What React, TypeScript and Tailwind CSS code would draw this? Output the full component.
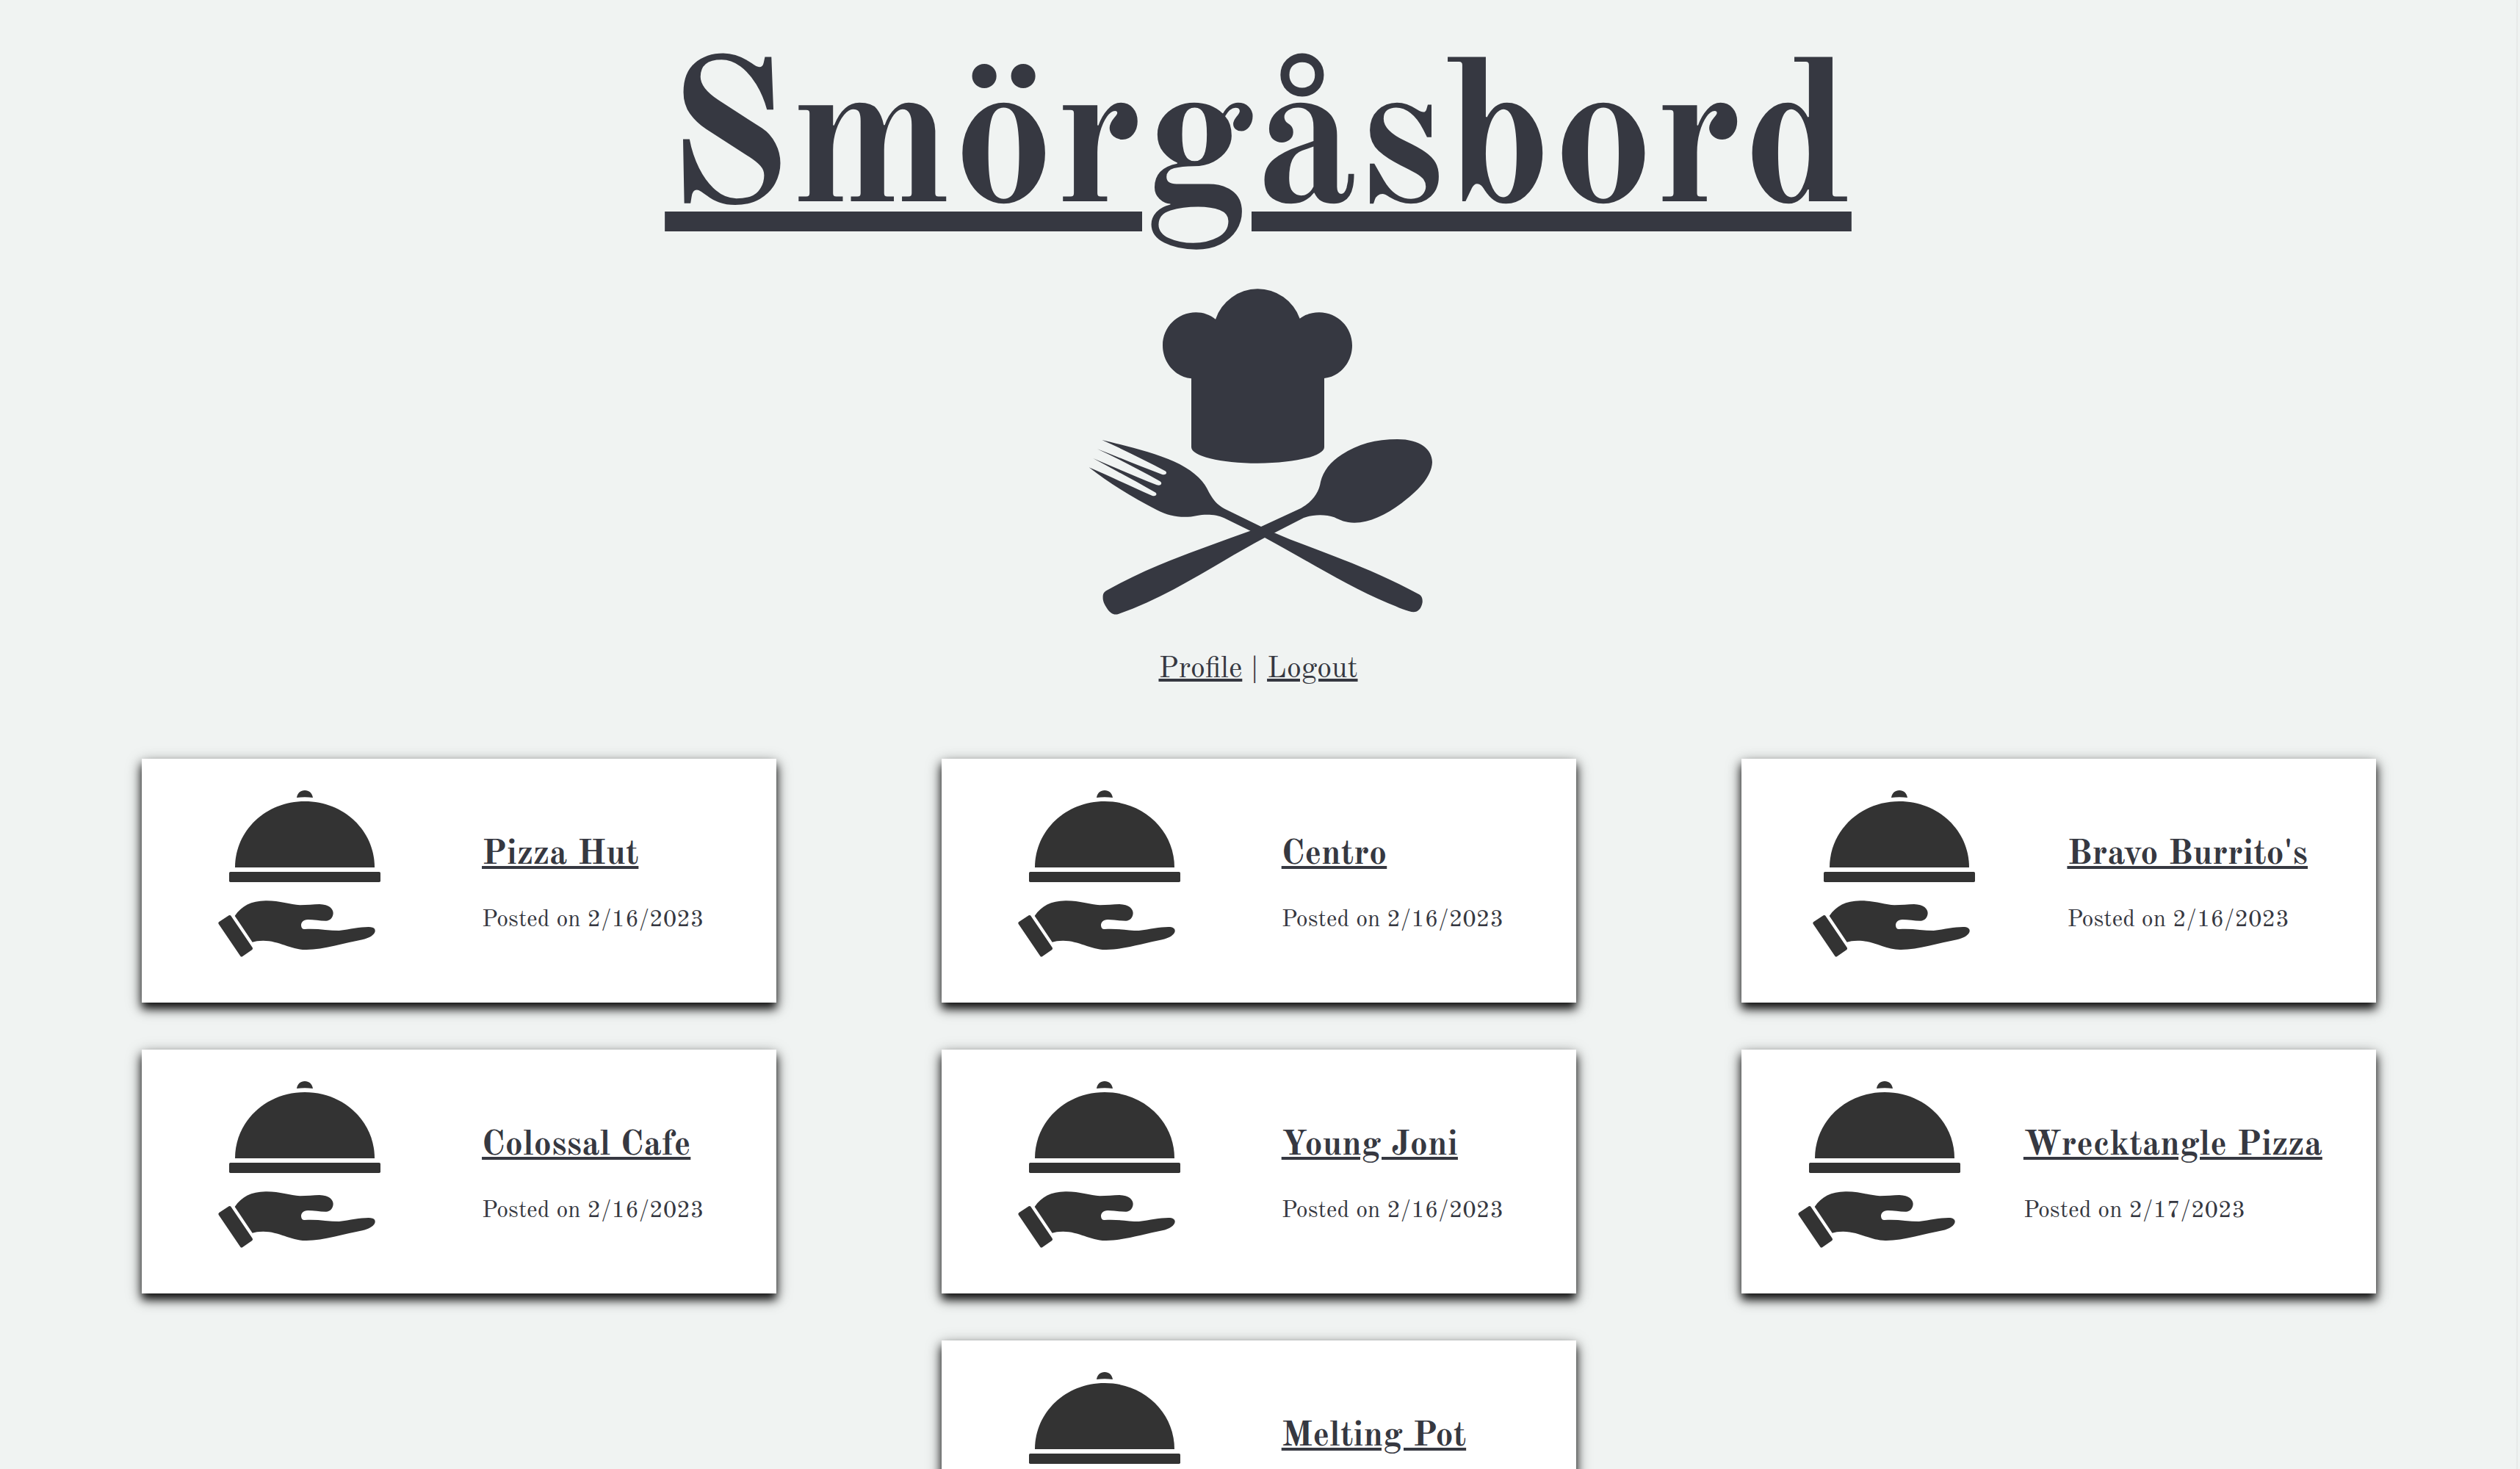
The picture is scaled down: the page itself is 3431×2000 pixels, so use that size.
const restaurants = [
  { name: "Pizza Hut", date: "2/16/2023" },
  { name: "Centro", date: "2/16/2023" },
  { name: "Bravo Burrito's", date: "2/16/2023" },
  { name: "Colossal Cafe", date: "2/16/2023" },
  { name: "Young Joni", date: "2/16/2023" },
  { name: "Wrecktangle Pizza", date: "2/17/2023" },
  { name: "Melting Pot", date: "2/16/2023" },
];

function ChefLogo() {
  return (
    <svg
      viewBox="-21 0 1560 1470"
      className="mt-2 h-[490px] w-[520px] fill-[#363841]"
      role="img"
      aria-label="Chef hat over crossed fork and spoon"
    >
      {/* hat */}
      <path d="M486 436C420 430 369 371 369 301C369 226 429 166 505 166C535 166 562 176 585 194A182 182 0 0 1 929 191C953 174 978 166 1008 166C1083 166 1143 226 1143 301C1143 371 1094 428 1029 435V716C1029 752 910 782 757 782S486 752 486 716Z" />
      {/* fork */}
      <path d="M121 687C210 709 330 737 415 775C480 804 530 845 550 885C573 932 590 950 622 968L771 1041L828 1067C970 1130 1190 1195 1415 1317C1428 1324 1431 1336 1430 1350C1426 1375 1412 1390 1394 1390C1372 1390 1330 1370 1290 1354C1120 1282 960 1180 786 1086L727 1058L620 1006C590 990 540 990 510 996C460 1007 400 1003 345 973C250 924 150 864 68 799C150 834 250 882 325 914C340 921 350 908 338 901C250 850 165 806 85 762C170 798 265 840 345 871C361 877 371 863 357 855C275 810 185 762 102 724C190 757 280 797 365 827C382 833 391 820 378 813C295 768 205 725 121 687Z" />
      {/* spoon */}
      <path d="M1328 684C1420 684 1470 725 1470 778C1468 840 1405 900 1345 945C1280 993 1215 1025 1152 1025C1115 1025 1095 1015 1070 1003C1035 990 985 990 945 1005L828 1065L786 1086C600 1184 400 1325 190 1397C170 1404 158 1396 145 1380C125 1350 124 1340 125 1322C126 1312 133 1305 145 1299C330 1195 530 1130 727 1058L771 1041L925 970C980 943 1008 900 1014 858C1024 815 1055 775 1100 747C1165 704 1240 684 1328 684Z" />
    </svg>
  );
}

function ServingIcon() {
  return (
    <svg
      viewBox="36 36 696 762"
      className="-mr-[66px] h-[254px] w-[232px] shrink-0 fill-[#333333]"
      aria-hidden="true"
    >
      <path d="M372 78C375 59 388 48 405 48S435 59 438 78Q405 74 372 78Z" />
      <path d="M120 363C120 213 245 93 405 93S690 213 690 363Z" />
      <rect x="96" y="381" width="618" height="42" rx="5" />
      <path d="M119 561C148 520 185 500 245 499C300 498 345 515 385 517C415 517 440 513 465 513C505 514 521 532 521 550C520 568 508 581 492 581C465 581 440 576 418 576C398 577 390 587 390 600C391 611 396 616 405 615C455 611 500 621 545 621C590 615 630 606 665 606C685 606 693 613 692 623C690 638 670 651 640 658C565 672 480 700 408 699C345 698 300 662 235 662C215 662 203 664 191 668Z" />
      <path d="M55 585L95 559Q100 556 103 560L191 690Q194 695 190 699L151 726Q146 730 142 725L53 594Q50 589 55 585Z" />
    </svg>
  );
}

function RestaurantCard({ name, date }: { name: string; date: string }) {
  return (
    <li className="my-8 flex w-[26.45%] min-w-[600px] items-center justify-around bg-white py-[39px] shadow-[0_6px_20px_rgba(0,0,0,0.4),0_8px_12px_rgba(0,0,0,0.9)]">
      <ServingIcon />
      <div className="flex flex-col gap-[34px] pt-[10px]">
        <h2 className="text-[48px] leading-[64px] font-bold">
          <a href="#" className="underline decoration-4 underline-offset-[3px]">
            {name}
          </a>
        </h2>
        <p className="text-[32px] leading-[48px]">Posted on {date}</p>
      </div>
    </li>
  );
}

export default function App() {
  return (
    <div className="bg-[#f0f3f2] pr-[3px] font-['Old_Standard_TT','Liberation_Serif',serif] text-[#363841]">
      <div className="min-h-screen border-r-2 border-[#e8e9e9]">
        <header className="flex flex-col items-center pt-[42px]">
          <h1 className="text-[276px] leading-[320px] font-bold">
            <a href="#" className="underline decoration-[27px] underline-offset-[14px]">
              Smörgåsbord
            </a>
          </h1>
          <ChefLogo />
          <nav className="mt-6 text-[40px] leading-[56px]">
            <a href="#" className="underline decoration-4 underline-offset-2">
              Profile
            </a>
            {" | "}
            <a href="#" className="underline decoration-4 underline-offset-2">
              Logout
            </a>
          </nav>
        </header>
        <main className="mt-[61px] pr-[79px] pl-[81px]">
          <ul className="flex flex-wrap justify-around">
            {restaurants.map((restaurant) => (
              <RestaurantCard key={restaurant.name} {...restaurant} />
            ))}
          </ul>
        </main>
      </div>
    </div>
  );
}
